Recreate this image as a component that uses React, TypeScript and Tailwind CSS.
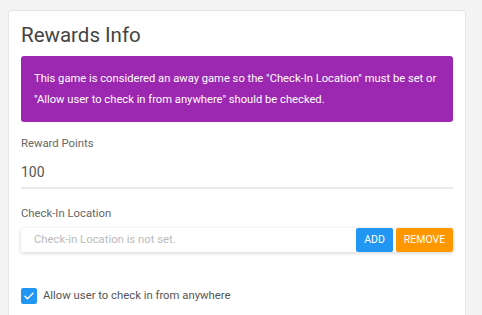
const App = () => {
  return (
    <div className="min-h-[315px] bg-[#f4f4f4] px-2 pt-[10px] font-['Roboto',sans-serif]">
      <div className="w-[458px] rounded-t-[3px] border border-[#e4e4e4] bg-white px-3 pb-6 pt-[9px]">
        <h2 className="text-[20.5px] leading-[30px] font-normal text-[#444]">Rewards Info</h2>
        <div className="mt-[6px] rounded-[3px] bg-[#9c27b0] px-[13px] py-3 text-[11.2px] leading-[21px] text-white">
          This game is considered an away game so the "Check-In Location" must be set or "Allow user to check in from anywhere" should be checked.
        </div>

        <div className="mt-[14px]">
          <label className="block text-[11.3px] leading-[16px] text-[#666]">Reward Points</label>
          <div className="mt-[10px] border-b-2 border-[#e8e8e8] pb-[5px] text-[14px] leading-[20px] text-[#555]">100</div>
        </div>

        <div className="mt-[17px]">
          <label className="block text-[11.3px] leading-[16px] text-[#666]">Check-In Location</label>
          <div className="mt-[6px] flex h-[24px] items-stretch rounded-[2px] shadow-[0_1px_4px_rgba(0,0,0,0.18)]">
            <div className="flex flex-1 items-center pl-[13px] text-[11.3px] text-[#bbb]">Check-in Location is not set.</div>
            <button className="w-[37px] rounded-[2px] bg-[#2196f3] text-[10.5px] text-white">ADD</button>
            <button className="ml-[3px] w-[57px] rounded-[2px] bg-[#ff9800] text-[10.5px] text-white">REMOVE</button>
          </div>
        </div>

        <label className="mt-[36px] flex items-center gap-[6px] text-[11.3px] text-[#555]">
          <span className="flex h-[16px] w-[16px] items-center justify-center rounded-[2px] bg-[#2196f3]">
            <svg width="12" height="12" viewBox="0 0 24 24" fill="none" stroke="white" strokeWidth="3" strokeLinecap="round" strokeLinejoin="round">
              <path d="M4 12.5l5 5L20 6.5" />
            </svg>
          </span>
          Allow user to check in from anywhere
        </label>
      </div>
    </div>
  );
};

export default App;
